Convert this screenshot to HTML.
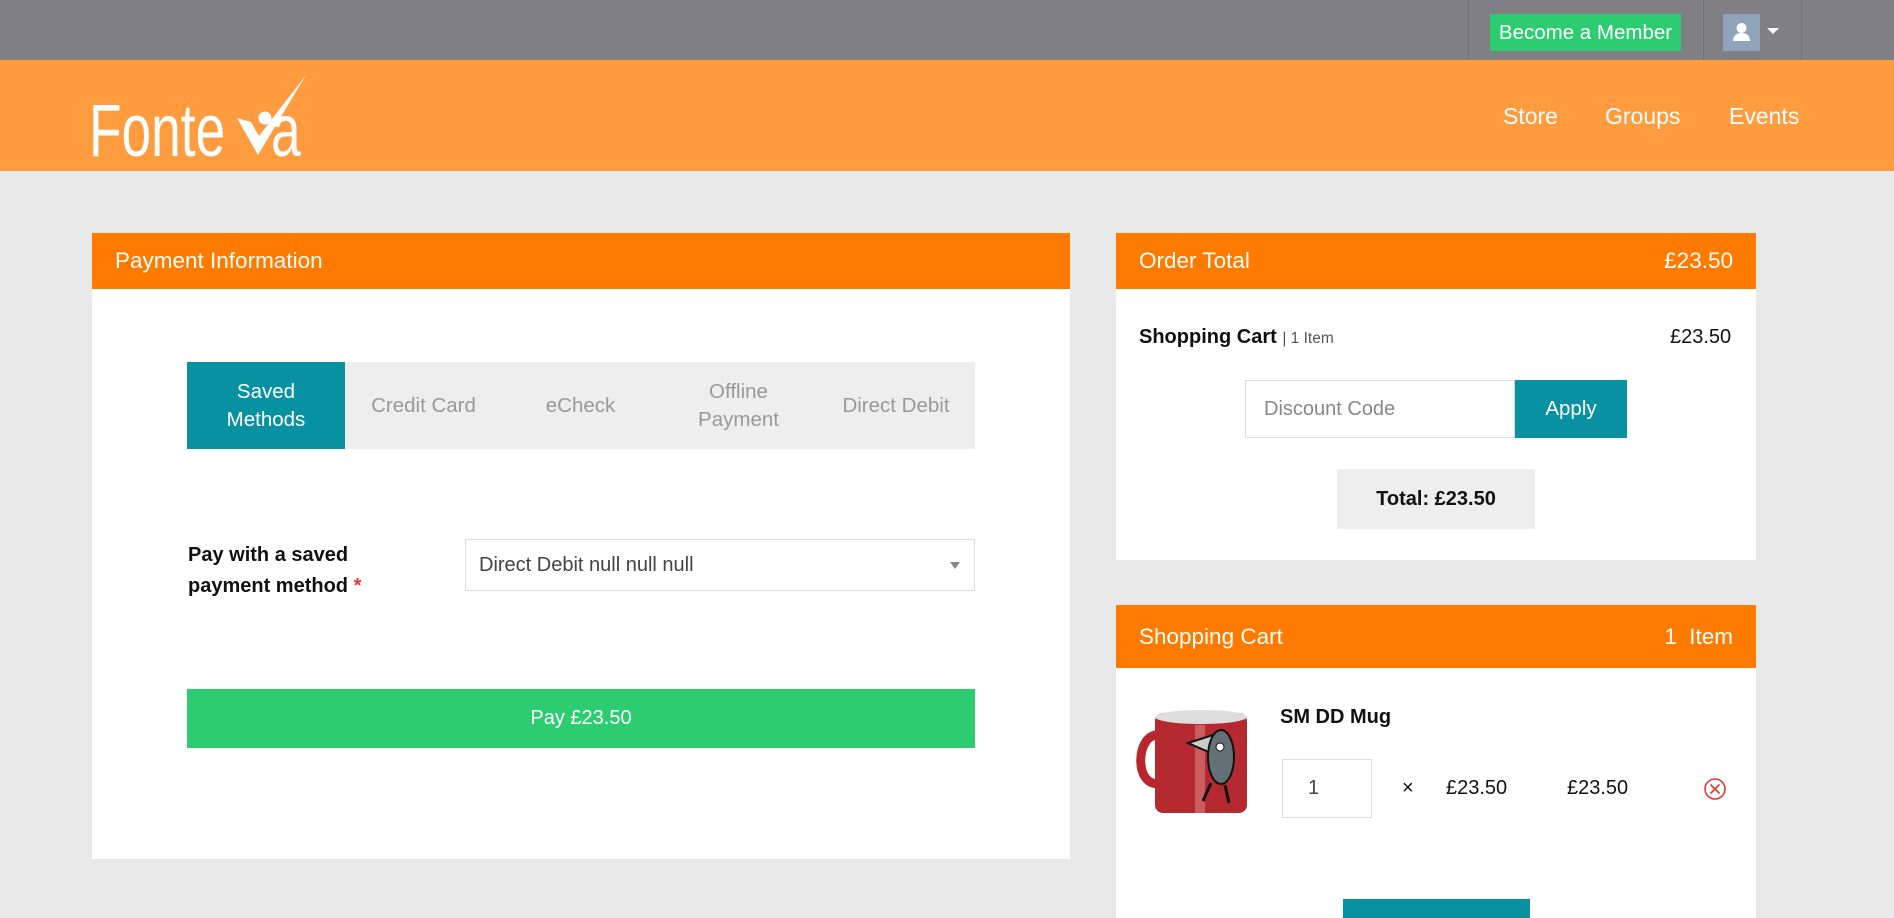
<!DOCTYPE html>
<html><head><meta charset="utf-8"><style>
*{box-sizing:border-box;margin:0;padding:0}
body{width:1894px;height:918px;overflow:hidden;background:#e9e9e9;font-family:"Liberation Sans",Arial,sans-serif;position:relative}
.a{position:absolute}
.top{left:0;top:0;width:1894px;height:60px;background:#807f84}
.hdr{left:0;top:60px;width:1894px;height:111px;background:#ff9c40}
.nav{color:#fff;font-size:23px;top:103px}
.ph{background:#ff7b00;color:#fff;font-size:22.5px}
.tab{top:362px;height:87px;width:157px;display:flex;align-items:center;justify-content:center;text-align:center;font-size:20.5px;color:#999;line-height:28px}
.lg{color:#fff;font-size:74px;line-height:74px;transform-origin:0 0;transform:scaleX(0.72)}
</style></head><body>
<div class="a top"></div>
<div class="a" style="left:1468px;top:0;width:1px;height:60px;background:#727176"></div>
<div class="a" style="left:1703px;top:0;width:1px;height:60px;background:#727176"></div>
<div class="a" style="left:1801px;top:0;width:1px;height:60px;background:#727176"></div>
<div class="a" style="left:1490px;top:14px;width:191px;height:37px;background:#2ecc71;color:#fff;font-size:20.5px;line-height:37px;text-align:center">Become a Member</div>
<div class="a" style="left:1723px;top:14px;width:37px;height:37px;background:#8fa4bb"><svg width="37" height="37"><circle cx="18.5" cy="14" r="5" fill="#fff"/><path d="M10 27c0-6 4-8 8.5-8s8.5 2 8.5 8z" fill="#fff"/></svg></div>
<div class="a" style="left:1767px;top:28px;width:0;height:0;border-left:6px solid transparent;border-right:6px solid transparent;border-top:6px solid #fff"></div>
<div class="a hdr"></div>
<div class="a lg" style="left:89px;top:94px">Fonte</div>
<div class="a lg" style="left:271px;top:94px">a</div>
<svg class="a" style="left:230px;top:74px" width="80" height="85"><path d="M7 44 L28 81 L76 1 L29 62 L21 48 Z" fill="#fff"/><circle cx="35" cy="44" r="6.5" fill="#fff"/></svg>
<div class="a nav" style="left:1503px">Store</div>
<div class="a nav" style="left:1605px">Groups</div>
<div class="a nav" style="left:1729px">Events</div>

<div class="a" style="left:92px;top:233px;width:978px;height:626px;background:#fff"></div>
<div class="a ph" style="left:92px;top:233px;width:978px;height:56px;line-height:56px;padding-left:23px">Payment Information</div>
<div class="a" style="left:187px;top:362px;width:788px;height:87px;background:#eee"></div>
<div class="a tab" style="left:187px;width:158px;background:#0891a0;color:#fff">Saved<br>Methods</div>
<div class="a tab" style="left:345px">Credit Card</div>
<div class="a tab" style="left:502px">eCheck</div>
<div class="a tab" style="left:660px">Offline<br>Payment</div>
<div class="a tab" style="left:817px;width:158px">Direct Debit</div>
<div class="a" style="left:188px;top:540px;font-size:20px;font-weight:bold;color:#111;line-height:31px">Pay with a saved<br>payment method <span style="color:#e53935">*</span></div>
<div class="a" style="left:465px;top:539px;width:510px;height:52px;border:1px solid #ddd;font-size:20px;color:#444;line-height:50px;padding-left:13px">Direct Debit null null null</div>
<div class="a" style="left:950px;top:562px;border-left:5px solid transparent;border-right:5px solid transparent;border-top:7px solid #888"></div>
<div class="a" style="left:187px;top:689px;width:788px;height:59px;background:#2ecc71;color:#fff;font-size:20px;line-height:59px;text-align:center">Pay £23.50</div>

<div class="a" style="left:1116px;top:233px;width:640px;height:327px;background:#fff"></div>
<div class="a ph" style="left:1116px;top:233px;width:640px;height:56px;line-height:56px;padding:0 23px">Order Total<span style="float:right">£23.50</span></div>
<div class="a" style="left:1139px;top:326px;font-size:20px;color:#111"><b>Shopping Cart</b> <span style="font-size:15.5px;color:#555">| 1 Item</span></div>
<div class="a" style="left:1670px;top:326px;font-size:20px;color:#111">£23.50</div>
<div class="a" style="left:1245px;top:380px;width:270px;height:58px;border:1px solid #ddd;font-size:20px;color:#888;line-height:56px;padding-left:18px">Discount Code</div>
<div class="a" style="left:1515px;top:380px;width:112px;height:58px;background:#0891a0;color:#fff;font-size:20.5px;line-height:58px;text-align:center">Apply</div>
<div class="a" style="left:1337px;top:469px;width:198px;height:60px;background:#eee;font-size:20px;font-weight:bold;color:#111;line-height:60px;text-align:center">Total: £23.50</div>

<div class="a" style="left:1116px;top:605px;width:640px;height:313px;background:#fff"></div>
<div class="a ph" style="left:1116px;top:605px;width:640px;height:63px;line-height:63px;padding:0 23px">Shopping Cart<span style="float:right">1&nbsp; Item</span></div>
<svg class="a" style="left:1133px;top:705px" width="122" height="112"><path d="M28 30 C2 25 0 85 28 78" fill="none" stroke="#b8262e" stroke-width="9"/><rect x="22" y="8" width="92" height="100" rx="8" fill="#b52a30"/><ellipse cx="68" cy="12" rx="46" ry="7" fill="#ddd"/><rect x="62" y="20" width="10" height="88" fill="#d98080" opacity=".6"/><path d="M55 38 L80 30 L78 48Z" fill="#ccc" stroke="#111" stroke-width="2"/><ellipse cx="88" cy="52" rx="13" ry="27" fill="#637078" stroke="#111" stroke-width="2"/><circle cx="87" cy="42" r="4" fill="#fff" stroke="#111"/><path d="M78 78 L70 96 M92 80 L96 98" stroke="#111" stroke-width="3"/></svg>
<div class="a" style="left:1280px;top:706px;font-size:20px;font-weight:bold;color:#111">SM DD Mug</div>
<div class="a" style="left:1282px;top:759px;width:90px;height:59px;border:1px solid #ddd;font-size:20px;color:#444;line-height:57px;padding-left:25px">1</div>
<div class="a" style="left:1402px;top:777px;font-size:20px;color:#111">×</div>
<div class="a" style="left:1446px;top:777px;font-size:20px;color:#111">£23.50</div>
<div class="a" style="left:1567px;top:777px;font-size:20px;color:#111">£23.50</div>
<svg class="a" style="left:1703px;top:777px" width="24" height="24"><circle cx="12" cy="12" r="10" fill="none" stroke="#e53935" stroke-width="1.6"/><path d="M7.5 7.5l9 9M16.5 7.5l-9 9" stroke="#e53935" stroke-width="1.6"/></svg>
<div class="a" style="left:1343px;top:899px;width:187px;height:19px;background:#0891a0"></div>
</body></html>
